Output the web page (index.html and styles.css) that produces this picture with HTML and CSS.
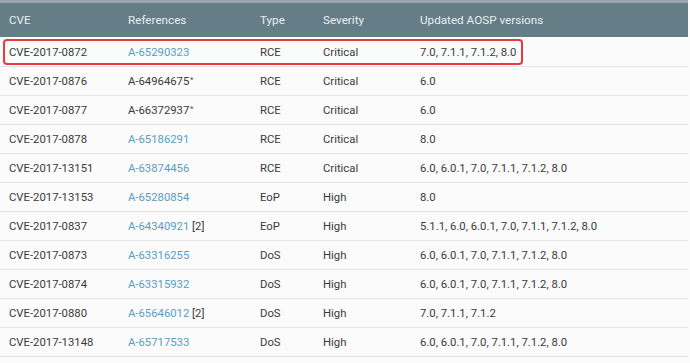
FILE: index.html
```html
<!DOCTYPE html>
<html lang="en">
  <head>
    <meta charset="UTF-8" />
    <meta name="viewport" content="width=device-width, initial-scale=1.0" />
    <title>Android Security Bulletin</title>
    <link rel="stylesheet" href="styles.css">
  </head>
  <body>
    <div class="table-wrap">
      <table class="cve-table">
        <colgroup>
          <col class="c-cve" />
          <col class="c-ref" />
          <col class="c-type" />
          <col class="c-sev" />
          <col class="c-ver" />
        </colgroup>
        <thead>
          <tr>
            <th>CVE</th>
            <th>References</th>
            <th>Type</th>
            <th>Severity</th>
            <th>Updated AOSP versions</th>
          </tr>
        </thead>
        <tbody>
          <tr>
            <td>CVE-2017-0872</td>
            <td><a href="#">A-65290323</a></td>
            <td>RCE</td>
            <td>Critical</td>
            <td>7.0, 7.1.1, 7.1.2, 8.0</td>
          </tr>
          <tr>
            <td>CVE-2017-0876</td>
            <td>A-64964675<sup>*</sup></td>
            <td>RCE</td>
            <td>Critical</td>
            <td>6.0</td>
          </tr>
          <tr>
            <td>CVE-2017-0877</td>
            <td>A-66372937<sup>*</sup></td>
            <td>RCE</td>
            <td>Critical</td>
            <td>6.0</td>
          </tr>
          <tr>
            <td>CVE-2017-0878</td>
            <td><a href="#">A-65186291</a></td>
            <td>RCE</td>
            <td>Critical</td>
            <td>8.0</td>
          </tr>
          <tr>
            <td>CVE-2017-13151</td>
            <td><a href="#">A-63874456</a></td>
            <td>RCE</td>
            <td>Critical</td>
            <td>6.0, 6.0.1, 7.0, 7.1.1, 7.1.2, 8.0</td>
          </tr>
          <tr>
            <td>CVE-2017-13153</td>
            <td><a href="#">A-65280854</a></td>
            <td>EoP</td>
            <td>High</td>
            <td>8.0</td>
          </tr>
          <tr>
            <td>CVE-2017-0837</td>
            <td><a href="#">A-64340921</a> [2]</td>
            <td>EoP</td>
            <td>High</td>
            <td>5.1.1, 6.0, 6.0.1, 7.0, 7.1.1, 7.1.2, 8.0</td>
          </tr>
          <tr>
            <td>CVE-2017-0873</td>
            <td><a href="#">A-63316255</a></td>
            <td>DoS</td>
            <td>High</td>
            <td>6.0, 6.0.1, 7.0, 7.1.1, 7.1.2, 8.0</td>
          </tr>
          <tr>
            <td>CVE-2017-0874</td>
            <td><a href="#">A-63315932</a></td>
            <td>DoS</td>
            <td>High</td>
            <td>6.0, 6.0.1, 7.0, 7.1.1, 7.1.2, 8.0</td>
          </tr>
          <tr>
            <td>CVE-2017-0880</td>
            <td><a href="#">A-65646012</a> [2]</td>
            <td>DoS</td>
            <td>High</td>
            <td>7.0, 7.1.1, 7.1.2</td>
          </tr>
          <tr>
            <td>CVE-2017-13148</td>
            <td><a href="#">A-65717533</a></td>
            <td>DoS</td>
            <td>High</td>
            <td>6.0, 6.0.1, 7.0, 7.1.1, 7.1.2, 8.0</td>
          </tr>
        </tbody>
      </table>
      <!-- annotation box around the first row -->
      <div class="highlight"></div>
    </div>
  </body>
</html>
```

FILE: styles.css
```css
body {
  margin: 0;
  font-family: Roboto, "Liberation Sans", sans-serif;
  background-color: #fbfbfb;
  color: #3a3a3a;
}

.table-wrap {
  position: relative;
  width: 688px;
}

.cve-table {
  width: 688px;
  border-collapse: collapse;
  table-layout: fixed;
  font-size: 11.3px;
}

.c-cve {
  width: 119px;
}

.c-ref {
  width: 132px;
}

.c-type {
  width: 63px;
}

.c-sev {
  width: 97px;
}

.cve-table thead tr {
  background-color: #657d86;
  border-top: 3px solid #95a6ad;
}

.cve-table th {
  height: 34px;
  padding: 0 0 0 9px;
  text-align: left;
  font-weight: 400;
  font-size: 11.7px;
  color: #e9eff1;
  vertical-align: middle;
}

.cve-table td {
  height: 28px;
  padding: 0 0 0 9px;
  border-bottom: 1px solid #e4e4e4;
  vertical-align: middle;
  white-space: nowrap;
}

.cve-table tbody tr:first-child td {
  padding-top: 1px;
}

.cve-table a {
  color: #5a9cc6;
  text-decoration: none;
}

.cve-table sup {
  font-size: 7px;
  vertical-align: 3px;
  margin-left: 1px;
}

.highlight {
  position: absolute;
  left: 3px;
  top: 39px;
  width: 516px;
  height: 22px;
  border: 2px solid #e23b40;
  border-radius: 4px;
  pointer-events: none;
}
```
